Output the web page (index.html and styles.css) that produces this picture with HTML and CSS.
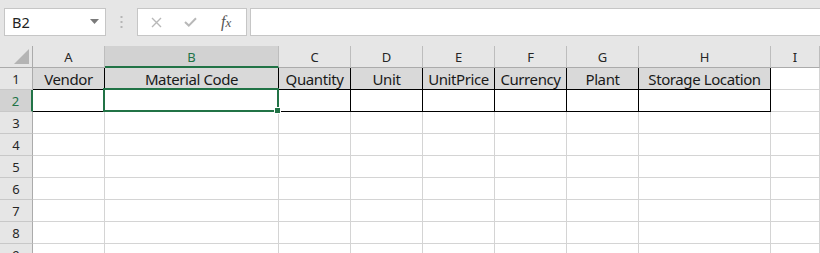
FILE: index.html
```html
<!DOCTYPE html>
<html>
<head>
<meta charset="utf-8">
<link rel="stylesheet" href="styles.css">
</head>
<body>
<div class="toolbar">
  <div class="namebox">
    <span class="nb-text">B2</span>
    <svg class="nb-arrow" width="9" height="5" viewBox="0 0 9 5"><path d="M0 0H9L4.5 5Z" fill="#7a7a7a"/></svg>
  </div>
  <svg class="dots" width="3" height="13" viewBox="0 0 3 13"><rect x="0.5" y="0" width="2" height="2" fill="#b5b5b5"/><rect x="0.5" y="5" width="2" height="2" fill="#b5b5b5"/><rect x="0.5" y="10" width="2" height="2" fill="#b5b5b5"/></svg>
  <div class="fxgroup">
    <svg class="ic-x" width="11" height="11" viewBox="0 0 11 11"><path d="M1 1L10 10M10 1L1 10" stroke="#b8b8b8" stroke-width="1.4" fill="none"/></svg>
    <svg class="ic-ok" width="13" height="10" viewBox="0 0 13 10"><path d="M1 5L4.8 8.6L12 1.2" stroke="#b8b8b8" stroke-width="2" fill="none"/></svg>
    <span class="fx">f<span class="fx-x">x</span></span>
  </div>
  <div class="formula"></div>
</div>

<div class="sheet">
  <div class="corner"><svg width="15" height="15" viewBox="0 0 15 15"><path d="M15 0V15H0Z" fill="#b4b4b4"/></svg></div>
  <div class="ch">A</div><div class="ch sel">B</div><div class="ch">C</div><div class="ch">D</div><div class="ch">E</div><div class="ch">F</div><div class="ch">G</div><div class="ch">H</div><div class="ch">I</div>

  <div class="rh">1</div>
  <div class="c hd b">Vendor</div><div class="c hd b">Material Code</div><div class="c hd b">Quantity</div><div class="c hd b">Unit</div><div class="c hd b">UnitPrice</div><div class="c hd b">Currency</div><div class="c hd b">Plant</div><div class="c hd b">Storage Location</div><div class="c"></div>

  <div class="rh sel">2</div>
  <div class="c b"></div><div class="c b"></div><div class="c b"></div><div class="c b"></div><div class="c b"></div><div class="c b"></div><div class="c b"></div><div class="c b"></div><div class="c"></div>

  <div class="rh">3</div>
  <div class="c"></div><div class="c"></div><div class="c"></div><div class="c"></div><div class="c"></div><div class="c"></div><div class="c"></div><div class="c"></div><div class="c"></div>
  <div class="rh">4</div>
  <div class="c"></div><div class="c"></div><div class="c"></div><div class="c"></div><div class="c"></div><div class="c"></div><div class="c"></div><div class="c"></div><div class="c"></div>
  <div class="rh">5</div>
  <div class="c"></div><div class="c"></div><div class="c"></div><div class="c"></div><div class="c"></div><div class="c"></div><div class="c"></div><div class="c"></div><div class="c"></div>
  <div class="rh">6</div>
  <div class="c"></div><div class="c"></div><div class="c"></div><div class="c"></div><div class="c"></div><div class="c"></div><div class="c"></div><div class="c"></div><div class="c"></div>
  <div class="rh">7</div>
  <div class="c"></div><div class="c"></div><div class="c"></div><div class="c"></div><div class="c"></div><div class="c"></div><div class="c"></div><div class="c"></div><div class="c"></div>
  <div class="rh">8</div>
  <div class="c"></div><div class="c"></div><div class="c"></div><div class="c"></div><div class="c"></div><div class="c"></div><div class="c"></div><div class="c"></div><div class="c"></div>
  <div class="rh">9</div>
  <div class="c"></div><div class="c"></div><div class="c"></div><div class="c"></div><div class="c"></div><div class="c"></div><div class="c"></div><div class="c"></div><div class="c"></div>

  <div class="selection"><div class="handle"></div></div>
</div>
</body>
</html>
```
FILE: styles.css
```css
html, body {
  margin: 0;
  padding: 0;
  background: #ffffff;
  overflow: hidden;
}
body {
  width: 820px;
  height: 253px;
  font-family: "Noto Sans", "Liberation Sans", sans-serif;
}
.toolbar {
  height: 46px;
  box-sizing: border-box;
  background: #e6e6e6;
  display: flex;
  align-items: flex-start;
  padding-top: 8px;
  padding-left: 4px;
}
.namebox {
  width: 102px;
  height: 28px;
  box-sizing: border-box;
  background: #fff;
  border: 1px solid #c6c6c6;
  display: flex;
  align-items: center;
  justify-content: space-between;
  padding: 0 6px 0 7px;
}
.nb-text {
  font-size: 14.5px;
  color: #222;
  line-height: 1;
}
.nb-arrow {
  margin-bottom: 2px;
}
.dots {
  margin: 8px 0 0 14px;
}
.fxgroup {
  margin-left: 14px;
  width: 110px;
  height: 28px;
  box-sizing: border-box;
  background: #fff;
  border: 1px solid #c6c6c6;
  display: flex;
  align-items: center;
  padding-left: 13px;
}
.ic-ok {
  margin-left: 22px;
}
.fx {
  margin-left: 24px;
  font-family: "Liberation Serif", "DejaVu Serif", serif;
  font-style: italic;
  font-size: 16px;
  color: #555;
  line-height: 1;
}
.fx-x {
  font-size: 13px;
}
.formula {
  margin-left: 3px;
  flex: 1;
  height: 28px;
  box-sizing: border-box;
  background: #fff;
  border: 1px solid #c6c6c6;
  border-right: none;
}
.sheet {
  position: relative;
  display: grid;
  grid-template-columns: 33px 72px 174px 72px 72px 72px 72px 72px 132px 1fr;
  grid-auto-rows: 22px;
}
.sheet > div {
  box-sizing: border-box;
}
.corner {
  background: #e6e6e6;
  border-right: 1px solid #ababab;
  border-bottom: 1px solid #ababab;
  display: flex;
  align-items: flex-end;
  justify-content: flex-end;
  padding: 0 3px 3px 0;
}
.corner svg { display: block; }
.ch {
  background: #e6e6e6;
  border-bottom: 1px solid #ababab;
  border-right: 1px solid #bdbdbd;
  font-size: 13px;
  color: #262626;
  display: flex;
  align-items: center;
  justify-content: center;
  padding-top: 1px;
}
.ch.sel {
  background: #d2d2d2;
  color: #217346;
  border-bottom: 2px solid #217346;
  padding-top: 2px;
}
.rh {
  background: #e6e6e6;
  border-right: 1px solid #ababab;
  border-bottom: 1px solid #c8c8c8;
  font-size: 13px;
  color: #262626;
  display: flex;
  align-items: center;
  justify-content: center;
  padding-top: 1px;
}
.rh.sel {
  background: #d2d2d2;
  color: #217346;
  border-right: 2px solid #217346;
}
.c {
  border-right: 1px solid #d4d4d4;
  border-bottom: 1px solid #d4d4d4;
  background: #fff;
}
.c.b {
  border-right-color: #000;
  border-bottom-color: #000;
}
.c.hd {
  background: #d9d9d9;
  font-size: 15px;
  letter-spacing: -0.4px;
  color: #1a1a1a;
  display: flex;
  align-items: center;
  justify-content: center;
  white-space: nowrap;
  overflow: hidden;
  padding-top: 1px;
}
.selection {
  position: absolute;
  left: 103px;
  top: 42px;
  width: 176px;
  height: 24px;
  box-sizing: border-box;
  border: 2px solid #217346;
}
.handle {
  position: absolute;
  right: -4px;
  bottom: -4px;
  width: 5px;
  height: 5px;
  background: #217346;
  border: 1px solid #fff;
}
```
